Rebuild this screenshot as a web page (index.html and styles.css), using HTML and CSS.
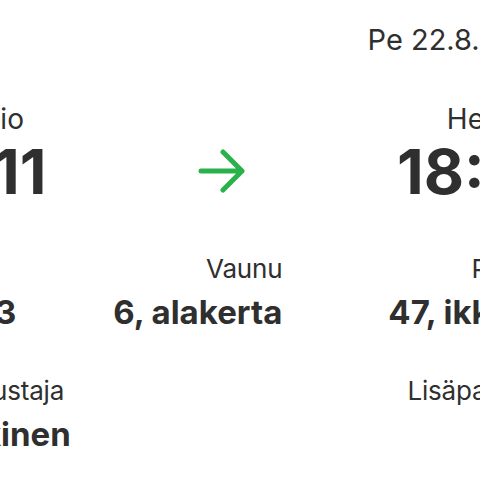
FILE: index.html
```html
<!DOCTYPE html>
<html lang="fi">
  <head>
    <meta charset="UTF-8" />
    <meta name="viewport" content="width=device-width, initial-scale=1.0" />
    <title>Matkalippu</title>
    <link rel="stylesheet" href="styles.css">
  </head>
  <body>
    <div class="ticket">
      <div class="date">Pe 22.8.2025</div>

      <!-- Departure and arrival -->
      <div class="route">
        <div class="stop">
          <div class="station">Kuopio</div>
          <div class="time">9:11</div>
        </div>
        <div class="arrow">
          <svg width="48" height="44" viewBox="0 0 48 44">
            <path d="M3 22 H44 M25 3 L44 22 L25 41" fill="none" stroke="#2bb14c" stroke-width="5" stroke-linecap="round" stroke-linejoin="round" />
          </svg>
        </div>
        <div class="stop stop-end">
          <div class="station">Helsinki</div>
          <div class="time">18:41</div>
        </div>
      </div>

      <div class="details">
        <div class="item">
          <div class="label">Juna</div>
          <div class="value">IC 83</div>
        </div>
        <div class="item item-end">
          <div class="label">Vaunu</div>
          <div class="value">6, alakerta</div>
        </div>
        <div class="item item-end">
          <div class="label">Paikka</div>
          <div class="value">47, ikkuna</div>
        </div>
      </div>

      <div class="extra">
        <div class="item">
          <div class="label">Matkustaja</div>
          <div class="value">Mäkinen</div>
        </div>
        <div class="item item-end">
          <div class="label">Lisäpalvelut</div>
        </div>
      </div>
    </div>
  </body>
</html>
```

FILE: styles.css
```css
body {
  font-family: Inter, "Liberation Sans", sans-serif;
  background-color: #fff;
  color: #2f2f2f;
  margin: 0;
  padding: 0;
  overflow: hidden;
}

.ticket {
  width: 619px;
  margin-left: -68px;
  padding-top: 24px;
}

.date {
  text-align: right;
  font-size: 29px;
  line-height: 32px;
}

.route {
  display: flex;
  justify-content: space-between;
  align-items: flex-end;
  margin-top: 47px;
}

.station {
  font-size: 28px;
  line-height: 32px;
}

.time {
  font-size: 62px;
  font-weight: bold;
  line-height: 74px;
}

.stop-end {
  text-align: right;
}

.arrow {
  padding-bottom: 16px;
}

.arrow svg {
  display: block;
}

/* Juna / Vaunu / Paikka */
.details {
  display: grid;
  grid-template-columns: minmax(0, 1fr) auto auto;
  column-gap: 106px;
  margin-top: 44px;
}

.extra {
  display: flex;
  justify-content: space-between;
  margin-top: 36px;
}

.item-end {
  text-align: right;
}

.label {
  font-size: 26px;
  line-height: 32px;
  letter-spacing: -0.2px;
  white-space: nowrap;
}

.value {
  font-size: 33px;
  font-weight: bold;
  line-height: 54px;
  white-space: nowrap;
}
```
